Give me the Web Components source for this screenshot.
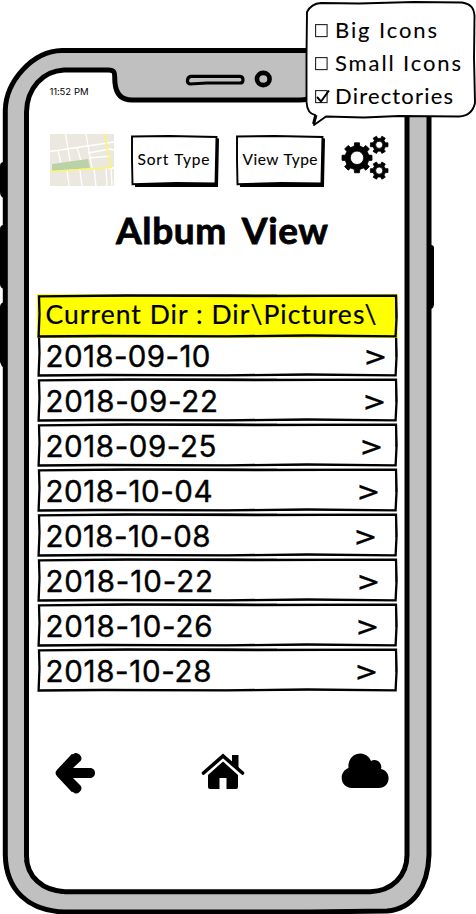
<!DOCTYPE html>
<html lang="en">
<head>
<meta charset="utf-8">
<title>Album View</title>
<style>
html,body{margin:0;background:#fff;color:#000;overflow:hidden}
body{width:476px;height:914px;font-family:Lato,"Open Sans",sans-serif}
</style>
</head>
<body>
<album-app></album-app>
<script>
const define=(name,html,setup)=>customElements.define(name,class extends HTMLElement{
  connectedCallback(){
    if(this.shadowRoot)return;
    const t=document.createElement('template');t.innerHTML=html;
    this.attachShadow({mode:'open'}).append(t.content.cloneNode(true));
    if(setup)setup(this,this.shadowRoot);
  }
});

/* Single line of text, tracked so that it spans the given width. */
define('fit-text',`<style>:host{display:block;white-space:pre}span{display:inline-block;word-spacing:var(--gap,.06em);-webkit-text-stroke:var(--ink,.3px) #000;paint-order:stroke;stroke-linejoin:round}</style><span></span>`,(el,r)=>{
  const s=r.querySelector('span');s.textContent=el.getAttribute('text');
  const n=s.textContent.length,w=+el.getAttribute('width');
  const d=(w-s.getBoundingClientRect().width)/(n-1);
  s.style.letterSpacing=d+'px';s.style.marginRight=-d+'px';
});

define('phone-frame',`<style>:host{display:block;width:476px;height:914px}svg{display:block}</style>
<svg width="476" height="914" viewBox="0 0 476 914">
<path d="M4 162Q0 162 0 166V192Q0 197 4 198ZM4 225Q0 225 0 229V284Q0 288 4 289ZM4 302Q0 303 0 307V362Q1 366 4 368Z"/>
<path d="M427 245H431Q434 245 434 248V304Q434 309 430 309H427Z"/>
<path d="M62 50.500H374C407 50 429 75 429 110V855C428 887 413 909 387 911L310 912H65C28 911 6 890 5.3 855V110C6 82 32 51 62 50.500Z" fill="#c0c0c0" stroke="#000" stroke-width="5"/>
<path d="M64 70H108C117 70 114 75 115 83C116 94 121 100 132 100H300C311 100 317 94 317 84C317 75 319 70 326 70H370C394 70 407 87 407 108V855C407 876 392 891 370 891.7H65C43 891 26.5 877 26.5 856V112C27 88 43 71 64 70Z" fill="#fff" stroke="#000" stroke-width="5"/>
<path d="M25 860C29 876 42 890 63 893" fill="none" stroke="#000" stroke-width="2"/>
<path d="M191 76.4H240C244 77 244 83 240 83H207L190 84C186 83 187 77 191 76.4Z" fill="#c0c0c0" stroke="#000" stroke-width="3.2"/>
<ellipse cx="263.3" cy="79" rx="6.3" ry="6.1" fill="#c0c0c0" stroke="#000" stroke-width="4.600"/>
</svg>`);

define('map-thumb',`<style>:host{display:block;width:64px;height:52px}svg{display:block}</style>
<svg width="64" height="52" viewBox="0 0 64 52"><rect width="64" height="52" fill="#ebe8e0"/>
<g fill="none" stroke="#fff" stroke-width="1.3"><path d="M0 17.5L64 8M15.500 0L20 27M36 0L42 34M8 16L11 30M27 13L31 27M38 19L60 15L64 16M39 24L60 22M17 36L19 52M30 36L32 52M44 35L46 52M56 34L57 52M61 34L62 52M55 34H64"/></g>
<path d="M2 30L38 25L40 34L2 37Z" fill="#bbd2a9"/><path d="M0 37.500L61 33.500L54.500 0" fill="none" stroke="#fff56a" stroke-width="1.5"/></svg>`);

define('sketch-button',`<style>:host{display:grid;height:52px}svg,fit-text{grid-area:1/1}svg{display:block;width:100%;height:100%}fit-text{font-size:15.5px;line-height:19px;padding:15px 0 0 6.500px;--ink:.1px}</style>
<svg viewBox="0 0 88 52" preserveAspectRatio="none"><path d="M84 3L88 3.500L87 52H4V48L84 47Z"/><path d="M1 1.500L38 1L85.500 2L84.500 48.500L45 48L1.500 49.300L1 25Z" fill="#fff" stroke="#000" stroke-width="1.900"/></svg>
<fit-text></fit-text>`);

/* Toothed wheel outline with a round hole. */
function gear(cx,cy,R,r,hole,n,rot){
  let d='';
  for(let i=0;i<n;i++){
    const a=rot+i*2*Math.PI/n,st=Math.PI/n;
    [[r,-.58],[R,-.42],[R,.42],[r,.58]].forEach(([q,k],j)=>{
      d+=(i||j?'L':'M')+(cx+q*Math.cos(a+k*st)).toFixed(2)+' '+(cy+q*Math.sin(a+k*st)).toFixed(2);
    });
  }
  return d+`ZM${cx-hole} ${cy}a${hole} ${hole} 0 1 0 ${2*hole} 0a${hole} ${hole} 0 1 0 ${-2*hole} 0Z`;
}
define('gears-icon',`<style>:host{display:block;width:48px;height:46px}svg{display:block}</style><svg width="48" height="46"><path fill-rule="evenodd" stroke="#000" stroke-width=".8" stroke-linejoin="round"/></svg>`,(el,r)=>
  r.querySelector('path').setAttribute('d',gear(16,23.800,15.200,12,6.700,8,0)+gear(38.200,10.800,9,6.500,3.600,6,0)+gear(38.200,36.600,9,6.500,3.600,6,0)));

define('dir-row',`<style>
:host{display:grid;height:44px;width:361px}
svg,div{grid-area:1/1}svg{display:block;width:361px;height:44px}
div{display:flex;justify-content:space-between;font:29.500px/36px Inter,Roboto,sans-serif;--ink:.4px;padding:5px 0 0 8.500px}
.go{display:inline-block;width:20px;text-align:center;height:36px;margin-right:var(--edge);position:relative;top:0;-webkit-text-stroke:.3px #000;transform:scale(1.3,.95)}
:host([header]) div{font:26.500px/32px Lato,sans-serif;--ink:.2px;--gap:0em;padding-top:4px}
</style>
<svg viewBox="0 0 361 44"><rect class="bg" y="-.5" width="361" height="45"/><path class="box" d="M2 2.300L90 1.500L220 2L359 1.700L359.600 22L358.600 42.300L270 41.500L190 42.300L65 42L1.600 42.500L2.500 20Z" stroke="#000" stroke-width="2.300"/><path d="M60 2.200Q130 .900 240 1.300M110 42Q190 43 280 41.500M359 4V24" fill="none" stroke="#000" stroke-width="1.200"/></svg>
<div><fit-text></fit-text></div>`,(el,r)=>{
  const h=el.hasAttribute('header');
  r.querySelector('.bg').setAttribute('fill',h?'#ff0':'#fff');
  r.querySelector('.box').setAttribute('fill',h?'#ff0':'#fff');
  if(!h){const g=document.createElement('span');g.className='go';g.textContent='>';
    g.style.setProperty('--edge',(398.5-(+el.getAttribute('edge')))+'px');r.querySelector('div').append(g);}
});

define('nav-bar',`<style>:host{display:flex;justify-content:space-between;width:335px;height:44px}svg{display:block}svg:nth-of-type(2){margin-left:8px}</style>
<svg width="42" height="44" viewBox="0 0 42 44"><path d="M21.500 6L6.500 22L21.500 38M8 22H36" fill="none" stroke="#000" stroke-width="9.500" stroke-linejoin="round"/><path d="M3 20L19 3.300Q22 .500 25.500 3.500Q29 7 26.500 10L19 17H37Q41 18 41 22T37 27H19L26.500 34.500Q29 38 25.500 41Q22 44 19 41L3 24Q1.200 22 3 20Z"/></svg>
<svg width="44" height="44" viewBox="0 0 44 44"><path d="M7 24L22 10.500L37 24V36Q37 38 35 38H25.500V27H18.500V38H9Q7 38 7 36Z"/><path d="M2.500 22L22 5L41.500 22" fill="none" stroke="#000" stroke-width="3.600" stroke-linecap="round"/><path d="M31 4H37.500V18L31 12Z"/></svg>
<svg width="48" height="44" viewBox="0 0 48 44"><path d="M11 37C-1 37-3 21 7.500 17C6 4 20-2 27.500 6Q29 7.600 30 10C35 7 42 12 40 18C51 20 50 37 37.500 37Z"/></svg>`);

define('view-menu',`<style>
:host{display:grid;width:172px;height:127px}
svg.bubble,ul{grid-area:1/1}svg{display:block}
ul{list-style:none;margin:0;padding:15px 0 0 11px;display:flex;flex-direction:column}
li{display:flex;gap:5px;height:33px;font-size:22px;line-height:29px}
li svg{margin-top:9px}li fit-text{--ink:.1px;--gap:0em}
</style>
<svg class="bubble" width="172" height="127" viewBox="0 0 172 127"><path d="M17 3L55 3.500L110 2L158 2.500C167 4 170 8 170.500 16L170 58L171 103C169 112 164 116 155 116.500L95 116L60 117.500L22 116.500L10 125L11 115C5 114 3 109 2.500 102V55L3 12C6 6 10 3.500 17 3Z" fill="#fff" stroke="#000" stroke-width="1.900" stroke-linejoin="round"/><path d="M9.500 124L12 115" stroke="#000" stroke-width="3"/></svg>
<ul></ul>`,(el,r)=>{
  [['Big Icons',102],['Small Icons',126],['Directories',118,1]].forEach(([t,w,on])=>{
    const li=document.createElement('li');
    li.innerHTML=`<svg width="15" height="14" viewBox="0 0 15 14"><rect x=".6" y=".6" width="11.500" height="12" fill="#fff" stroke="#222" stroke-width="1.100"/>${on?'<path d="M2 7L6 11.500L14 .500" fill="none" stroke="#000" stroke-width="2"/>':''}</svg><fit-text text="${t}" width="${w}"></fit-text>`;
    r.querySelector('ul').append(li);
  });
});

/* Rows and buttons hand their label to the nested text element. */
const label=(tag,text,w,extra='')=>`<${tag} label="${text}" span="${w}" ${extra}></${tag}>`;
define('album-app',`<style>
:host{display:grid;width:476px;height:914px;position:relative}
phone-frame,main{grid-area:1/1}
main{position:relative;display:flex;flex-direction:column;align-items:flex-start;box-sizing:border-box;padding:85px 0 0 37px}
.time{font:9.500px/14px Inter,sans-serif;height:14px;margin-left:12.500px;--ink:0px}
.tools{display:flex;margin:35px 0 0 13px;height:52px}
.tools sketch-button:nth-child(2){width:88px;margin:1px 17px 0}
.tools sketch-button:nth-child(3){width:89px;margin:1px 16px 0 0}
h1{margin:19px 0 0 79px;font-size:37px;line-height:50px;height:50px;font-weight:700;--ink:.8px;--gap:.18em}
.list{display:grid;grid-template-rows:39.300px;grid-auto-rows:44.900px;margin-top:39px;height:398px}
.list dir-row[header]{position:relative}
nav-bar{margin:59px 0 0 17px}
view-menu{position:absolute;left:304px;top:0}
</style>
<phone-frame></phone-frame>
<main>
<fit-text class="time" text="11:52 PM" width="39"></fit-text>
<div class="tools"><map-thumb></map-thumb>${label('sketch-button','Sort Type',72)}${label('sketch-button','View Type',75)}<gears-icon></gears-icon></div>
<h1><fit-text text="Album View" width="212"></fit-text></h1>
<div class="list"></div>
<nav-bar></nav-bar>
</main>
<view-menu></view-menu>`,(el,r)=>{
  r.querySelector('.list').innerHTML=label('dir-row','Current Dir : Dir\\Pictures\\',331,'header style="z-index:1"')+
  [['09-10',165,385],['09-22',172.5,384],['09-25',171,381.5],['10-04',167,378],['10-08',165,375.5],['10-22',167.5,378],['10-26',167,377.5],['10-28',166,376.5]]
   .map(([d,w,x])=>label('dir-row','2018-'+d,w,`edge="${x}"`)).join('');
  r.querySelectorAll('[label]').forEach(n=>{
    const f=n.shadowRoot.querySelector('fit-text'),g=document.createElement('fit-text');
    g.setAttribute('text',n.getAttribute('label'));g.setAttribute('width',n.getAttribute('span'));f.replaceWith(g);
  });
});
</script>
</body>
</html>
